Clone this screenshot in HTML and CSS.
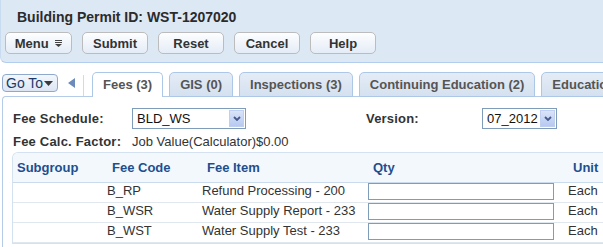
FILE: index.html
```html
<!DOCTYPE html>
<html lang="en">
<head>
  <meta charset="UTF-8" />
  <title>Building Permit WST-1207020</title>
  <link rel="stylesheet" href="styles.css">
</head>
<body>
  <div class="record-header">
    <h1 class="record-title">Building Permit ID: WST-1207020</h1>
    <div class="toolbar">
      <button class="btn btn-menu">Menu
        <svg width="7" height="7" viewBox="0 0 7 7"><rect x="0" y="0" width="7" height="1" fill="#444"/><rect x="0" y="2" width="7" height="1" fill="#444"/><polygon points="0,4 7,4 3.5,7" fill="#444"/></svg>
      </button>
      <button class="btn">Submit</button>
      <button class="btn">Reset</button>
      <button class="btn">Cancel</button>
      <button class="btn">Help</button>
    </div>
  </div>

  <div class="tabbar">
    <button class="goto">Go To<svg width="9" height="5" viewBox="0 0 9 5"><polygon points="0,0 9,0 4.5,5" fill="#3a3a3a"/></svg></button>
    <span class="tab-prev"></span>
    <span class="tab-sep"></span>
    <div class="tab active">Fees (3)</div>
    <div class="tab">GIS (0)</div>
    <div class="tab">Inspections (3)</div>
    <div class="tab">Continuing Education (2)</div>
    <div class="tab">Education (1)</div>
  </div>

  <div class="panel">
    <div class="form-grid">
      <label class="field-label">Fee Schedule:</label>
      <div class="select select-wide">
        <span class="select-value">BLD_WS</span>
        <span class="select-arrow"><svg width="8" height="5" viewBox="0 0 8 5"><polyline points="1,1 4,4 7,1" fill="none" stroke="#46598a" stroke-width="1.8"/></svg></span>
      </div>
      <label class="field-label">Version:</label>
      <div class="select select-short">
        <span class="select-value">07_2012</span>
        <span class="select-arrow"><svg width="8" height="5" viewBox="0 0 8 5"><polyline points="1,1 4,4 7,1" fill="none" stroke="#46598a" stroke-width="1.8"/></svg></span>
      </div>
    </div>

    <div class="calc-row">
      <span class="field-label">Fee Calc. Factor:</span>
      <span>Job Value(Calculator)$0.00</span>
    </div>

    <div class="fee-table-wrap">
      <table class="fee-table">
        <colgroup>
          <col style="width:90px">
          <col style="width:95px">
          <col style="width:166px">
          <col style="width:200px">
          <col style="width:150px">
        </colgroup>
        <thead>
          <tr>
            <th class="first">Subgroup</th>
            <th>Fee Code</th>
            <th>Fee Item</th>
            <th>Qty</th>
            <th>Unit</th>
          </tr>
        </thead>
        <tbody>
          <tr>
            <td></td>
            <td>B_RP</td>
            <td>Refund Processing - 200</td>
            <td><input class="qty" type="text"></td>
            <td>Each</td>
          </tr>
          <tr>
            <td></td>
            <td>B_WSR</td>
            <td>Water Supply Report - 233</td>
            <td><input class="qty" type="text"></td>
            <td>Each</td>
          </tr>
          <tr>
            <td></td>
            <td>B_WST</td>
            <td>Water Supply Test - 233</td>
            <td><input class="qty" type="text"></td>
            <td>Each</td>
          </tr>
        </tbody>
      </table>
    </div>
  </div>
</body>
</html>
```

FILE: styles.css
```css
html, body {
  overflow: hidden;
}
body {
  margin: 0;
  font-family: "Liberation Sans", Arial, sans-serif;
  font-size: 13px;
  line-height: 15px;
  color: #333;
  background: #fff;
}
.record-header {
  background: #dde8f5;
  border-left: 1px solid #c9dbf0;
  border-bottom: 1px solid #b3cdee;
  border-bottom-left-radius: 6px;
  height: 53px;
  padding: 9px 0 0 4px;
}
.record-title {
  margin: 0 0 7px 12px;
  font-size: 14px;
  line-height: 16px;
  font-weight: bold;
  color: #2b2b2b;
}
.toolbar {
  display: flex;
  gap: 10px;
}
.btn {
  width: 66px;
  height: 22px;
  padding: 0;
  font-family: inherit;
  font-size: 13px;
  font-weight: bold;
  color: #333;
  border: 1px solid #bcbcbc;
  border-radius: 5px;
  background: linear-gradient(#fdfeff, #e4ecf6);
}
.btn-menu {
  width: 67px;
}
.btn-menu svg {
  margin-left: 3px;
  vertical-align: 1px;
}
.tabbar {
  display: flex;
  align-items: flex-end;
  height: 33px;
  padding-left: 2px;
  overflow: hidden;
  position: relative;
  z-index: 1;
  margin-bottom: -1px;
  padding-bottom: 1px;
}
.tabbar > * {
  flex-shrink: 0;
  white-space: nowrap;
}
.goto {
  height: 18px;
  width: 56px;
  margin-bottom: 4px;
  padding: 0 0 0 3px;
  text-align: left;
  font-family: inherit;
  font-size: 14px;
  line-height: 16px;
  color: #1b3a6a;
  border: 1px solid #8fa9cc;
  border-radius: 4px;
  background: linear-gradient(#f3f7fc, #dce6f3);
}
.goto svg {
  margin-left: 1px;
  vertical-align: 2px;
}
.tab-prev {
  width: 0;
  height: 0;
  margin: 0 0 8px 10px;
  border-top: 5.5px solid transparent;
  border-bottom: 5.5px solid transparent;
  border-right: 7px solid #6a8bbb;
}
.tab-sep {
  width: 1px;
  height: 21px;
  margin-left: 8px;
  background: #d2dae6;
}
.tab {
  height: 19px;
  margin: 0 0 -1px 6px;
  padding: 4px 10px 0;
  font-weight: bold;
  color: #555;
  border: 1px solid #adc7e7;
  border-radius: 5px 5px 0 0;
  background: linear-gradient(#e4ecf6, #d5e1f0);
}
.tab.active {
  margin-left: 8px;
  height: 20px;
  border-bottom: none;
  background: #fff;
}
.panel {
  margin-left: 2px;
  border: 1px solid #b5cce8;
  border-right: none;
  border-bottom: none;
  border-top-left-radius: 4px;
  padding: 11px 0 0 10px;
  height: 139px;
  overflow: hidden;
}
.form-grid {
  display: grid;
  grid-template-columns: 119px 234px 116px auto;
  align-items: center;
  height: 21px;
}
.field-label {
  font-weight: bold;
  color: #333;
  letter-spacing: 0.2px;
}
.select {
  display: flex;
  align-items: center;
  justify-content: space-between;
  box-sizing: border-box;
  height: 21px;
  border: 1px solid #7f9db9;
  padding: 1px;
  background: #fff;
  color: #111;
}
.select-wide {
  width: 114px;
}
.select-short {
  width: 75px;
}
.select-value {
  padding-left: 3px;
}
.select-arrow {
  display: flex;
  align-items: center;
  justify-content: center;
  width: 15px;
  height: 17px;
  box-sizing: border-box;
  border: 1px solid #c0cff0;
  background: linear-gradient(#dae4f9, #b7c9f1);
}
.calc-row {
  display: grid;
  grid-template-columns: 119px auto;
  margin-top: 5px;
}
.fee-table-wrap {
  margin: 3px 0 0 -1px;
  border: 1px solid #d3e1f1;
  border-right: none;
  border-top-left-radius: 6px;
  overflow: hidden;
}
.fee-table {
  table-layout: fixed;
  border-collapse: collapse;
  width: 701px;
}
.fee-table th {
  height: 29px;
  padding: 0 0 0 9px;
  text-align: left;
  font-weight: bold;
  color: #1d4f8f;
  background: #f3f8fd;
  border-bottom: 1px solid #cbdbee;
}
.fee-table th.first {
  padding-left: 4px;
}
.fee-table td {
  height: 19px;
  padding: 0 0 0 4px;
  vertical-align: top;
  color: #333;
  border-bottom: 1px solid #e1e7ef;
  white-space: nowrap;
}
.qty {
  display: block;
  box-sizing: border-box;
  width: 186px;
  height: 17px;
  margin: 0;
  padding: 0 2px;
  border: 1px solid #7f9db9;
  font-family: inherit;
  font-size: 13px;
}
```
